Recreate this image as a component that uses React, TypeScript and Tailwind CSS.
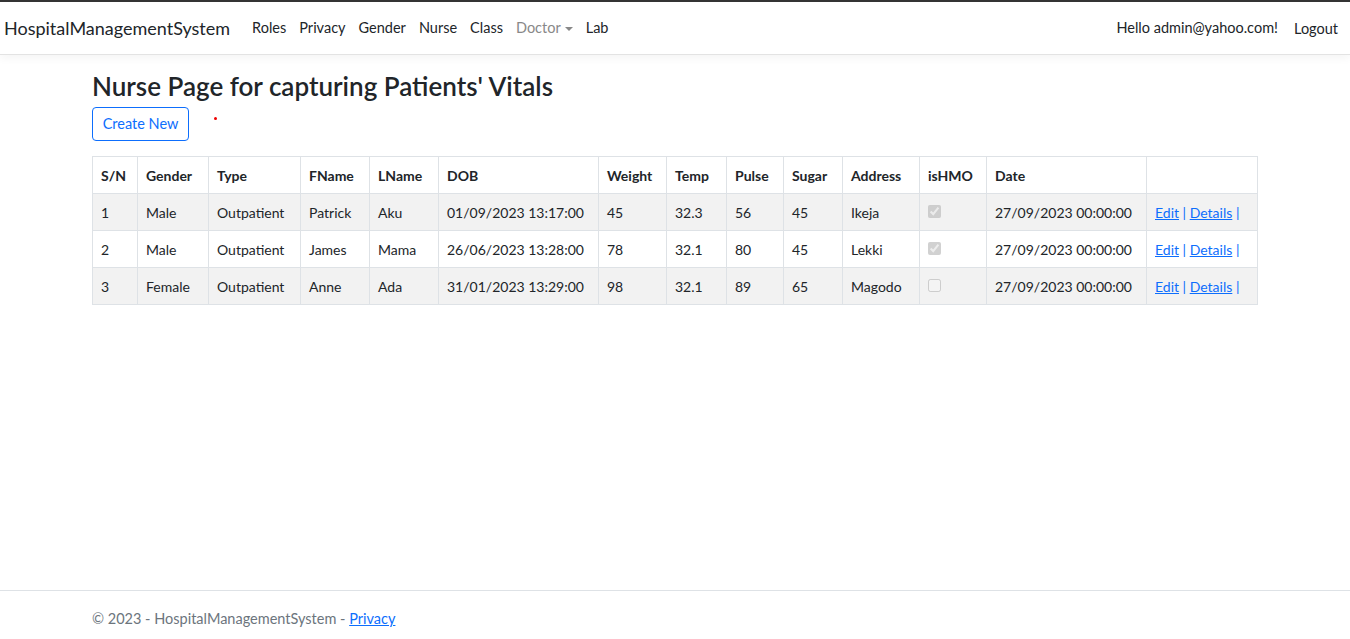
import React from "react";

const font = { fontFamily: 'Lato, "Open Sans", sans-serif' };

const navLinks = ["Roles", "Privacy", "Gender", "Nurse", "Class"];

const cols = [
  { label: "S/N", w: "w-[45px]" },
  { label: "Gender", w: "w-[71px]" },
  { label: "Type", w: "w-[92px]" },
  { label: "FName", w: "w-[69px]" },
  { label: "LName", w: "w-[69px]" },
  { label: "DOB", w: "w-[160px]" },
  { label: "Weight", w: "w-[68px]" },
  { label: "Temp", w: "w-[60px]" },
  { label: "Pulse", w: "w-[57px]" },
  { label: "Sugar", w: "w-[59px]" },
  { label: "Address", w: "w-[77px]" },
  { label: "isHMO", w: "w-[67px]" },
  { label: "Date", w: "w-[160px]" },
  { label: "", w: "w-[111px]" },
];

const rows = [
  { sn: 1, gender: "Male", type: "Outpatient", fname: "Patrick", lname: "Aku", dob: "01/09/2023 13:17:00", weight: 45, temp: "32.3", pulse: 56, sugar: 45, address: "Ikeja", hmo: true, date: "27/09/2023 00:00:00" },
  { sn: 2, gender: "Male", type: "Outpatient", fname: "James", lname: "Mama", dob: "26/06/2023 13:28:00", weight: 78, temp: "32.1", pulse: 80, sugar: 45, address: "Lekki", hmo: true, date: "27/09/2023 00:00:00" },
  { sn: 3, gender: "Female", type: "Outpatient", fname: "Anne", lname: "Ada", dob: "31/01/2023 13:29:00", weight: 98, temp: "32.1", pulse: 89, sugar: 65, address: "Magodo", hmo: false, date: "27/09/2023 00:00:00" },
];

export default function App() {
  const td = "border border-[#dee2e6] px-2 h-[37px] align-middle whitespace-nowrap overflow-hidden";
  return (
    <div className="min-h-[639px] flex flex-col bg-white text-[#212529] text-[14px]" style={font}>
      <header className="border-t-2 border-[#343434] border-b border-b-[#e3e3e3] shadow-[0_4px_8px_rgba(0,0,0,0.04)]">
        <nav className="h-[52px] flex items-center pl-[4px] pr-[12px]">
          <a className="text-[18px] text-[#212529] mr-[22px]">HospitalManagementSystem</a>
          <ul className="flex items-center gap-[13px] text-[14.5px]">
            {navLinks.map((l) => (
              <li key={l} className="text-[#212529]">{l}</li>
            ))}
            <li className="text-[#888] flex items-center gap-[4px]">
              Doctor
              <span className="border-x-[4px] border-x-transparent border-t-[4px] border-t-[#888] w-0 h-0 mt-[1px]" />
            </li>
            <li className="text-[#212529]">Lab</li>
          </ul>
          <div className="ml-auto flex items-center gap-[16px] text-[14.5px]">
            <span>Hello admin@yahoo.com!</span>
            <span className="mt-[2px]">Logout</span>
          </div>
        </nav>
      </header>

      <main className="w-[1166px] mx-auto flex-1 pt-[15px]">
        <h1 className="text-[26px] font-semibold leading-[32px]">Nurse Page for capturing Patients' Vitals</h1>
        <div className="flex items-start mt-[5px]">
          <button className="h-[34px] w-[97px] border border-[#0d6efd] text-[#0d6efd] rounded-[4px] text-[14.5px]">
            Create New
          </button>
          <span className="w-[3px] h-[3px] bg-[#e00] rounded-full ml-[25px] mt-[10px]" />
        </div>

        <table className="table-fixed border-collapse mt-[15px] w-[1166px]">
          <thead>
            <tr>
              {cols.map((c) => (
                <th key={c.label} className={`${td} ${c.w} text-left font-bold`}>{c.label}</th>
              ))}
            </tr>
          </thead>
          <tbody>
            {rows.map((r, i) => (
              <tr key={r.sn} className={i % 2 === 0 ? "bg-[#f2f2f2]" : "bg-white"}>
                <td className={td}>{r.sn}</td>
                <td className={td}>{r.gender}</td>
                <td className={td}>{r.type}</td>
                <td className={td}>{r.fname}</td>
                <td className={td}>{r.lname}</td>
                <td className={td}>{r.dob}</td>
                <td className={td}>{r.weight}</td>
                <td className={td}>{r.temp}</td>
                <td className={td}>{r.pulse}</td>
                <td className={td}>{r.sugar}</td>
                <td className={td}>{r.address}</td>
                <td className={td}>
                  <input type="checkbox" checked={r.hmo} disabled readOnly className="w-[13px] h-[13px] align-middle -mt-[4px]" />
                </td>
                <td className={td}>{r.date}</td>
                <td className={td}>
                  <a className="text-[#0d6efd] underline">Edit</a>
                  <span className="text-[#0d6efd]"> | </span>
                  <a className="text-[#0d6efd] underline">Details</a>
                  <span className="text-[#0d6efd]"> |</span>
                </td>
              </tr>
            ))}
          </tbody>
        </table>
      </main>

      <footer className="border-t border-[#dee2e6] h-[49px] flex items-center">
        <div className="w-[1166px] mx-auto text-[#6c757d] text-[14.5px] mt-[8px]">
          © 2023 - HospitalManagementSystem - <a className="text-[#0d6efd] underline">Privacy</a>
        </div>
      </footer>
    </div>
  );
}
